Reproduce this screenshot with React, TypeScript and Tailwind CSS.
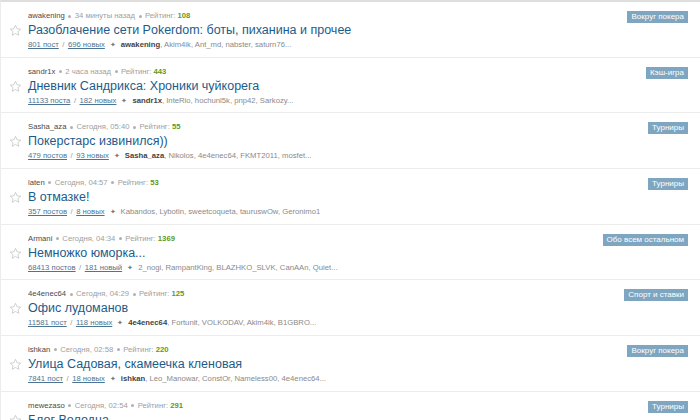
import React from "react";

type Row = {
  user: string;
  time: string;
  rating: string;
  title: string;
  posts: string;
  news: string;
  boldUser?: string;
  others: string;
  tag: string;
};

const rows: Row[] = [
  { user: "awakening", time: "34 минуты назад", rating: "108", title: "Разоблачение сети Pokerdom: боты, пиханина и прочее", posts: "801 пост", news: "696 новых", boldUser: "awakening", others: ", Akim4ik, Ant_md, nabster, saturn76...", tag: "Вокруг покера" },
  { user: "sandr1x", time: "2 часа назад", rating: "443", title: "Дневник Сандрикса: Хроники чуйкорега", posts: "11133 поста", news: "182 новых", boldUser: "sandr1x", others: ", InteRio, hochunl5k, pnp42, Sarkozy...", tag: "Кэш-игра" },
  { user: "Sasha_aza", time: "Сегодня, 05:40", rating: "55", title: "Покерстарс извинился))", posts: "479 постов", news: "93 новых", boldUser: "Sasha_aza", others: ", Nikolos, 4e4enec64, FKMT2011, mosfet...", tag: "Турниры" },
  { user: "laten", time: "Сегодня, 04:57", rating: "53", title: "В отмазке!", posts: "357 постов", news: "8 новых", others: "Kabandos, Lybotin, sweetcoqueta, tauruswOw, Geronimo1", tag: "Турниры" },
  { user: "Armani", time: "Сегодня, 04:34", rating: "1369", title: "Немножко юморка...", posts: "68413 постов", news: "181 новый", others: "2_nogi, RampantKing, BLAZHKO_SLVK, CanAAn, Quiet...", tag: "Обо всем остальном" },
  { user: "4e4enec64", time: "Сегодня, 04:29", rating: "125", title: "Офис лудоманов", posts: "11581 пост", news: "118 новых", boldUser: "4e4enec64", others: ", Fortunit, VOLKODAV, Akim4ik, B1GBRO...", tag: "Спорт и ставки" },
  { user: "ishkan", time: "Сегодня, 02:58", rating: "220", title: "Улица Садовая, скамеечка кленовая", posts: "7841 пост", news: "18 новых", boldUser: "ishkan", others: ", Leo_Manowar, ConstOr, Nameless00, 4e4enec64...", tag: "Вокруг покера" },
  { user: "mewezaso", time: "Сегодня, 02:54", rating: "291", title: "Блог Володца", posts: "1000 постов", news: "10 новых", boldUser: "mewezaso", others: ", ...", tag: "Турниры" },
];

function Star() {
  return (
    <svg width="13" height="13" viewBox="0 0 24 24" fill="none" stroke="#bdbdbd" strokeWidth="1.3" strokeLinejoin="round">
      <path d="M12 2.5l2.9 6.3 6.8.7-5.1 4.6 1.5 6.8L12 17.4l-6.1 3.5 1.5-6.8-5.1-4.6 6.8-.7z" />
    </svg>
  );
}

function Dot() {
  return <span className="mx-[3.5px] inline-block h-[3px] w-[3px] rounded-full bg-[#b0b0b0]" />;
}

function TopicRow({ r }: { r: Row }) {
  return (
    <div className="relative h-[55.67px] shrink-0 border-b border-[#ececec] pl-[27px] pr-[12px] pt-[9px]">
      <div className="flex h-[10px] items-center text-[7.7px] leading-[10px] text-[#a0a0a0]">
        <span className="text-[#4a4a4a]">{r.user}</span>
        <Dot />
        <span>{r.time}</span>
        <Dot />
        <span>Рейтинг:&nbsp;</span>
        <span className="font-bold text-[#5d9a25]">{r.rating}</span>
      </div>
      <div className="h-[18px] text-[12.5px] leading-[18px] text-[#1c5c8a]">{r.title}</div>
      <div className="flex h-[12px] items-center text-[7.7px] leading-[12px] text-[#8a8a8a]">
        <span className="text-[#4d7593] underline">{r.posts}</span>
        <span className="mx-[3.5px] text-[#999]">/</span>
        <span className="text-[#4d7593] underline">{r.news}</span>
        <span className="mx-[5px] text-[6.5px] text-[#777]">✦</span>
        {r.boldUser && <span className="font-bold text-[#444]">{r.boldUser}</span>}
        <span>{r.others}</span>
      </div>
      <div className="absolute left-[8px] top-[22px]">
        <Star />
      </div>
      <div className="absolute right-[12px] top-[9px] flex h-[12px] items-center bg-[#7ea6c0] px-[4px] text-[8px] leading-[12px] text-white">
        {r.tag}
      </div>
    </div>
  );
}

export default function App() {
  return (
    <div className="flex h-[420px] w-[700px] flex-col overflow-hidden border-t-2 border-l border-t-[#dedede] border-l-[#ececec] bg-white" style={{ fontFamily: '"Liberation Sans", Arial, sans-serif' }}>
      {rows.map((r, i) => (
        <TopicRow key={i} r={r} />
      ))}
    </div>
  );
}
